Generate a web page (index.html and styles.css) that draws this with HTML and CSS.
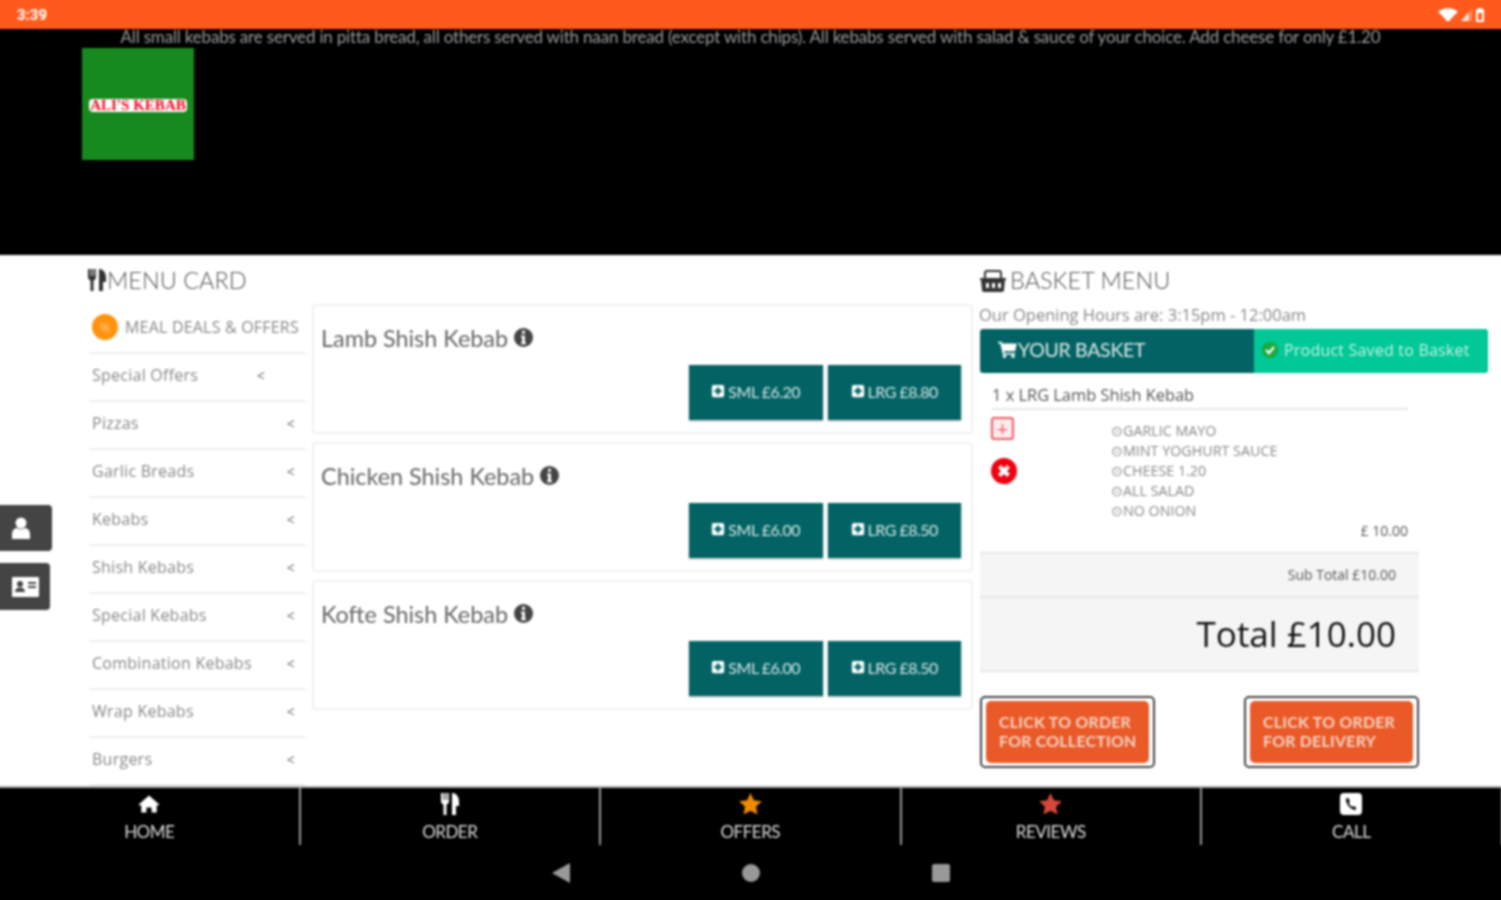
FILE: index.html
```html
<!DOCTYPE html>
<html lang="en">
<head>
    <meta charset="UTF-8">
    <meta name="viewport" content="width=device-width, initial-scale=1.0">
    <title>Ali's Kebab</title>
    <link rel="stylesheet" href="styles.css">
</head>
<body>
    <svg class="defs" width="0" height="0">
        <symbol id="cutlery" viewBox="0 0 20 24">
            <path d="M1 1v8c0 2 1 3 2.500 3.500V23h3V12.500C8 12 9 11 9 9V1H7.500v7h-1V1h-2v7h-1V1zM12 1c3 0 7 2 7 9v4h-3v9h-4z"/>
        </symbol>
        <symbol id="cart" viewBox="0 0 22 20">
            <path d="M0 1h4l1 2h17l-2 9H7l.4 2H20v2H5.500L2.500 3H0z"/><circle cx="7.500" cy="18" r="2"/><circle cx="17.500" cy="18" r="2"/>
        </symbol>
        <symbol id="plus-square" viewBox="0 0 16 16">
            <path fill-rule="evenodd" d="M3 1h10a2 2 0 0 1 2 2v10a2 2 0 0 1-2 2H3a2 2 0 0 1-2-2V3a2 2 0 0 1 2-2zM6.500 4v2.500H4v3h2.500V12h3V9.500H12v-3H9.500V4z"/>
        </symbol>
        <symbol id="info" viewBox="0 0 20 20">
            <path fill-rule="evenodd" d="M10 0a10 10 0 1 1 0 20 10 10 0 0 1 0-20zM8.500 3v3h3V3zM7.500 8v2h1v5h-1v2h5v-2h-1V8z"/>
        </symbol>
        <symbol id="star" viewBox="0 0 24 24">
            <path d="M12 1l3.400 7.300 7.900 1-5.800 5.400 1.500 7.900-7-3.900-7 3.900 1.500-7.900L.7 9.300l7.900-1z"/>
        </symbol>
    </svg>

    <div class="status-bar">
        <span class="clock">3:39</span>
        <div class="status-icons">
            <svg width="20" height="14" viewBox="0 0 20 14"><path d="M0 3.500C5.500-1 14.500-1 20 3.500L10 14z" fill="#fff"/></svg>
            <svg width="12" height="12" viewBox="0 0 12 12"><path d="M0 12L8 3v9z" fill="#fff" opacity=".85"/><path d="M9 2l2-2v12H9z" fill="#fff" opacity=".35"/></svg>
            <svg width="8" height="14" viewBox="0 0 8 14"><path fill-rule="evenodd" d="M2.500 0h3v1H8v13H0V1h2.500zM2 5v7h4V5z" fill="#fff"/></svg>
        </div>
    </div>

    <div class="banner">
        <p class="notice">All small kebabs are served in pitta bread, all others served with naan bread (except with chips). All kebabs served with salad &amp; sauce of your choice. Add cheese for only £1.20</p>
        <div class="logo"><span>ALI'S KEBAB</span></div>
    </div>

    <div class="main">
        <div class="side-tabs">
            <div class="side-tab">
                <svg width="18" height="22" viewBox="0 0 18 22"><circle cx="9" cy="6" r="5.500" fill="#fff"/><path d="M0 22v-5c0-4 3-6 5-6 2 1.500 6 1.500 8 0 2 0 5 2 5 6v5z" fill="#fff"/></svg>
            </div>
            <div class="side-tab">
                <svg width="27" height="20" viewBox="0 0 27 20"><path fill-rule="evenodd" d="M1 0h25a1 1 0 0 1 1 1v18a1 1 0 0 1-1 1H1a1 1 0 0 1-1-1V1a1 1 0 0 1 1-1zM8 4a3 3 0 1 0 0 6 3 3 0 0 0 0-6zM3 15h10c0-3-2-4.500-5-4.500S3 12 3 15zM16 5v2h8V5zm0 4v2h8V9z" fill="#fff"/></svg>
            </div>
        </div>

        <div class="menu-col">
            <h2 class="section-title">
                <svg class="title-icon" width="20" height="24"><use href="#cutlery"/></svg>MENU CARD
            </h2>
            <ul class="cat-list">
                <li class="cat cat-deals">
                    <span class="deal-badge">%</span>MEAL DEALS &amp; OFFERS
                </li>
                <li class="cat cat-short"><span>Special Offers</span><span class="chev">&lt;</span></li>
                <li class="cat"><span>Pizzas</span><span class="chev">&lt;</span></li>
                <li class="cat"><span>Garlic Breads</span><span class="chev">&lt;</span></li>
                <li class="cat"><span>Kebabs</span><span class="chev">&lt;</span></li>
                <li class="cat"><span>Shish Kebabs</span><span class="chev">&lt;</span></li>
                <li class="cat"><span>Special Kebabs</span><span class="chev">&lt;</span></li>
                <li class="cat"><span>Combination Kebabs</span><span class="chev">&lt;</span></li>
                <li class="cat"><span>Wrap Kebabs</span><span class="chev">&lt;</span></li>
                <li class="cat"><span>Burgers</span><span class="chev">&lt;</span></li>
            </ul>
        </div>

        <div class="products">
            <div class="product">
                <div class="product-name">Lamb Shish Kebab <svg class="info" width="19" height="19"><use href="#info"/></svg></div>
                <div class="price-row">
                    <button class="price-btn"><svg width="14" height="14"><use href="#plus-square"/></svg>SML £6.20</button>
                    <button class="price-btn"><svg width="14" height="14"><use href="#plus-square"/></svg>LRG £8.80</button>
                </div>
            </div>
            <div class="product">
                <div class="product-name">Chicken Shish Kebab <svg class="info" width="19" height="19"><use href="#info"/></svg></div>
                <div class="price-row">
                    <button class="price-btn"><svg width="14" height="14"><use href="#plus-square"/></svg>SML £6.00</button>
                    <button class="price-btn"><svg width="14" height="14"><use href="#plus-square"/></svg>LRG £8.50</button>
                </div>
            </div>
            <div class="product">
                <div class="product-name">Kofte Shish Kebab <svg class="info" width="19" height="19"><use href="#info"/></svg></div>
                <div class="price-row">
                    <button class="price-btn"><svg width="14" height="14"><use href="#plus-square"/></svg>SML £6.00</button>
                    <button class="price-btn"><svg width="14" height="14"><use href="#plus-square"/></svg>LRG £8.50</button>
                </div>
            </div>
        </div>

        <div class="basket-col">
            <h2 class="section-title">
                <svg class="title-icon basket-icon" width="26" height="24" viewBox="0 0 26 24"><path fill-rule="evenodd" d="M7 2h12a3 3 0 0 1 3 3v5h-2V5a1 1 0 0 0-1-1H7a1 1 0 0 0-1 1v5H4V5a3 3 0 0 1 3-3zM0 10h26v2h-1l-1 10a2 2 0 0 1-2 2H4a2 2 0 0 1-2-2L1 12H0zM6 15v5h3v-5zm6 0v5h3v-5zm6 0v5h3v-5z"/></svg>BASKET MENU
            </h2>
            <p class="hours">Our Opening Hours are: 3:15pm - 12:00am</p>
            <div class="basket-bar">
                <div class="basket-head">
                    <svg width="19" height="17"><use href="#cart"/></svg>YOUR BASKET
                </div>
                <div class="basket-saved">
                    <svg width="16" height="16" viewBox="0 0 16 16"><circle cx="8" cy="8" r="8" fill="#1fa83c"/><path d="M4 8l3 3 5-6" fill="none" stroke="#fff" stroke-width="2.200"/></svg>Product Saved to Basket
                </div>
            </div>
            <div class="basket-body">
                <div class="line-title">1 x LRG Lamb Shish Kebab</div>
                <div class="line-detail">
                    <div class="line-actions">
                        <span class="line-add">+</span>
                        <svg width="26" height="26" viewBox="0 0 26 26"><circle cx="13" cy="13" r="13" fill="#f0000f"/><path d="M8.500 8.500l9 9m0-9l-9 9" stroke="#fff" stroke-width="4"/></svg>
                    </div>
                    <ul class="options">
                        <li>⊙GARLIC MAYO</li>
                        <li>⊙MINT YOGHURT SAUCE</li>
                        <li>⊙CHEESE 1.20</li>
                        <li>⊙ALL SALAD</li>
                        <li>⊙NO ONION</li>
                    </ul>
                </div>
                <div class="line-price">£ 10.00</div>
                <div class="sub-total">Sub Total £10.00</div>
                <div class="grand-total">Total £10.00</div>
                <div class="order-row">
                    <div class="order-frame"><button class="order-btn">CLICK TO ORDER<br>FOR COLLECTION</button></div>
                    <div class="order-frame"><button class="order-btn">CLICK TO ORDER<br>FOR DELIVERY</button></div>
                </div>
            </div>
        </div>
    </div>

    <div class="bottom">
        <nav class="tabs">
            <div class="tab">
                <svg width="24" height="24" viewBox="0 -3 24 28"><path d="M12 1l12 10.500-1.500 1.500L21 11.800V21h-6v-6H9v6H3v-9.200L1.500 13 0 11.500z" fill="#fff"/></svg>
                <span>HOME</span>
            </div>
            <div class="tab">
                <svg width="22" height="24" fill="#fff"><use href="#cutlery"/></svg>
                <span>ORDER</span>
            </div>
            <div class="tab">
                <svg width="25" height="24" fill="#f08a00"><use href="#star"/></svg>
                <span>OFFERS</span>
            </div>
            <div class="tab">
                <svg width="25" height="24" fill="#d8473c"><use href="#star"/></svg>
                <span>REVIEWS</span>
            </div>
            <div class="tab">
                <svg width="22" height="24" viewBox="0 0 22 24"><path fill-rule="evenodd" d="M4 1h14a4 4 0 0 1 4 4v14a4 4 0 0 1-4 4H4a4 4 0 0 1-4-4V5a4 4 0 0 1 4-4zM7 6l-1 1c0 5 4 10 9 11l1.500-2-3-2-1.200 1C10 14 9 12 9 10l1-1-2-3z" fill="#fff"/></svg>
                <span>CALL</span>
            </div>
        </nav>
        <div class="soft-keys">
            <span class="key-back"></span>
            <span class="key-home"></span>
            <span class="key-recent"></span>
        </div>
    </div>
</body>
</html>
```

FILE: styles.css
```css
* {
    margin: 0;
    padding: 0;
    box-sizing: border-box;
}

html {
    background: #000;
    overflow: hidden;
}

/* the blur needs 5px of spare page on each side or the edges go dark */
body {
    width: 1511px;
    height: 910px;
    margin: -5px 0 0 -5px;
    display: flex;
    flex-direction: column;
    font-family: 'Open Sans', sans-serif;
    filter: blur(0.8px);
}

.defs {
    position: absolute;
}

ul {
    list-style: none;
}

.status-bar {
    height: 34px;
    flex: none;
    display: flex;
    align-items: center;
    justify-content: space-between;
    padding: 5px 21px 0 22px;
    background: #ff5a1c;
    color: white;
}

.clock {
    font-family: Roboto, sans-serif;
    font-size: 15px;
    font-weight: 700;
}

.status-icons {
    display: flex;
    align-items: center;
    gap: 3px;
    padding-right: 1px;
}

.banner {
    height: 226px;
    flex: none;
    background: #000;
    padding-left: 87px;
}

.notice {
    margin-left: -87px;
    height: 19px;
    line-height: 16px;
    text-align: center;
    font-family: Lato, sans-serif;
    font-size: 17px;
    letter-spacing: -0.18px;
    color: #9a9a9a;
}

.logo {
    width: 112px;
    height: 112px;
    display: flex;
    align-items: center;
    justify-content: center;
    padding-top: 3px;
    background: #168a1e;
}

.logo span {
    font-family: 'Liberation Serif', serif;
    font-size: 15px;
    font-weight: bold;
    white-space: nowrap;
    color: #f00a1e;
    background: white;
    border-radius: 4px;
    padding: 0 1px;
    line-height: 13px;
}

.main {
    position: relative;
    height: 531px;
    flex: none;
    display: flex;
    background: white;
    padding-left: 95px;
    overflow: hidden;
}

.side-tabs {
    position: absolute;
    left: 0;
    top: 250px;
    display: flex;
    flex-direction: column;
    gap: 12px;
}

.side-tab {
    width: 57px;
    height: 46px;
    display: flex;
    align-items: center;
    justify-content: center;
    padding: 0 10px 0 5px;
    background: #444;
    border-radius: 0 4px 4px 0;
}

.side-tab + .side-tab {
    width: 55px;
    height: 47px;
    padding-right: 0;
}

.section-title {
    height: 49px;
    display: flex;
    align-items: center;
    font-family: Lato, sans-serif;
    font-size: 23.500px;
    font-weight: 300;
    color: #555;
}

.title-icon {
    margin-left: -3px;
    fill: #333;
}

.basket-icon {
    margin: 0 4px 0 0;
}

.menu-col {
    width: 215px;
    flex: none;
}

.cat {
    height: 48px;
    display: flex;
    align-items: center;
    justify-content: space-between;
    padding: 0 10px 5px 2px;
    font-size: 16px;
    letter-spacing: 0.25px;
    color: #888;
    border-bottom: 2px solid #eee;
}

.cat-deals {
    justify-content: flex-start;
    gap: 7px;
    height: 50px;
    padding: 0 0 2px 2px;
    font-size: 16px;
    letter-spacing: 0.2px;
    white-space: nowrap;
}

.cat-short {
    padding-right: 40px;
}

.deal-badge {
    width: 26px;
    height: 26px;
    flex: none;
    display: flex;
    align-items: center;
    justify-content: center;
    border-radius: 50%;
    font-size: 12px;
    color: #ffc98a;
    background: #ff930f;
}

.chev {
    padding-top: 2px;
    font-size: 14px;
    color: #666;
}

.products {
    width: 661px;
    flex: none;
    margin: 49px 7px 0;
    display: flex;
    flex-direction: column;
    gap: 8px;
}

.product {
    height: 130px;
    padding: 9px 10px 0 7px;
    background: white;
    border: 2px solid #f1f1f1;
    border-radius: 4px;
}

.product-name {
    height: 45px;
    display: flex;
    align-items: center;
    font-family: Lato, sans-serif;
    font-size: 23.400px;
    color: #666;
    white-space: pre;
}

.info {
    fill: #444;
}

.price-row {
    display: flex;
    justify-content: flex-end;
    gap: 5px;
    margin-top: 5px;
}

.price-btn {
    width: 133.500px;
    height: 55px;
    display: flex;
    align-items: center;
    justify-content: center;
    gap: 3px;
    padding-bottom: 3px;
    background: #036364;
    border: none;
    fill: white;
    color: #d5e5e5;
    font-family: Lato, sans-serif;
    font-size: 16px;
    letter-spacing: -0.5px;
    box-shadow: 0 1px 2px rgba(0, 0, 0, 0.3);
}

.basket-col {
    width: 508px;
    flex: none;
}

.hours {
    height: 25px;
    margin-left: -1px;
    line-height: 22px;
    font-size: 16.500px;
    color: #888;
}

.basket-bar {
    height: 44px;
    display: flex;
}

.basket-head {
    width: 274px;
    display: flex;
    align-items: center;
    gap: 1px;
    padding: 0 0 3px 18px;
    background: #036364;
    border-radius: 3px 0 0 3px;
    fill: white;
    color: #dfeaea;
    font-family: Lato, sans-serif;
    font-size: 19.500px;
    letter-spacing: -0.3px;
}

.basket-saved {
    flex: 1;
    display: flex;
    align-items: center;
    gap: 6px;
    padding: 0 0 3px 8px;
    background: #00c896;
    border-radius: 0 3px 3px 0;
    color: #c6f2e5;
    font-size: 16px;
    letter-spacing: 0.2px;
}

.basket-body {
    width: 439px;
}

.line-title {
    margin: 10px 11px 0 12px;
    height: 27px;
    line-height: 24px;
    font-size: 16.400px;
    color: #555;
    border-bottom: 2px solid #e8e8e8;
}

.line-detail {
    display: flex;
    padding: 7px 0 0 11px;
}

.line-actions {
    width: 120px;
    flex: none;
    display: flex;
    flex-direction: column;
    gap: 18px;
}

.line-add {
    width: 23px;
    height: 23px;
    display: flex;
    align-items: center;
    justify-content: center;
    color: #f25a66;
    font-size: 20px;
    line-height: 1;
    background: #fdeaec;
    border: 2px solid #f25a66;
    border-radius: 3px;
}

.options {
    padding-top: 4px;
    font-size: 14.300px;
    line-height: 20px;
    color: #888;
}

.line-price {
    margin: 0 11px 0 0;
    height: 31px;
    line-height: 20px;
    text-align: right;
    font-size: 14px;
    color: #555;
}

.sub-total {
    height: 46px;
    line-height: 42px;
    padding-right: 23px;
    text-align: right;
    font-size: 14px;
    color: #555;
    background: #f5f5f5;
    border-top: 2px solid #e8e8e8;
    border-bottom: 2px solid #e8e8e8;
}

.grand-total {
    height: 74px;
    line-height: 72px;
    padding-right: 23px;
    text-align: right;
    font-size: 35px;
    color: #111;
    background: #f5f5f5;
    border-bottom: 2px solid #e8e8e8;
}

.order-row {
    display: flex;
    justify-content: space-between;
    margin-top: 24px;
}

.order-frame {
    width: 175px;
    height: 72px;
    padding: 3px 4px;
    background: white;
    border: 2px solid #444;
    border-radius: 5px;
}

.order-btn {
    width: 100%;
    height: 100%;
    padding: 0 0 2px 13px;
    text-align: left;
    background: #ea5a28;
    border: none;
    border-radius: 5px;
    color: #f4d4c4;
    font-family: Lato, sans-serif;
    font-size: 15.800px;
    font-weight: 700;
    line-height: 19px;
    letter-spacing: 0.3px;
    white-space: nowrap;
}

.bottom {
    flex: 1;
    background: #000;
    border-top: 2px solid #aaa;
}

.tabs {
    height: 57px;
    display: flex;
    margin-left: 5px;
}

.tab {
    width: 300.500px;
    display: flex;
    flex-direction: column;
    align-items: center;
    gap: 5px;
    padding-top: 4px;
    border-right: 2px solid #999;
    font-family: Lato, sans-serif;
    font-size: 17px;
    letter-spacing: -0.5px;
    color: #ddd;
}

.soft-keys {
    display: flex;
    align-items: center;
    justify-content: center;
    gap: 172px;
    height: 55px;
}

.key-back {
    width: 0;
    height: 0;
    border-top: 10px solid transparent;
    border-bottom: 10px solid transparent;
    border-right: 18px solid #999;
}

.key-home {
    width: 18px;
    height: 18px;
    border-radius: 50%;
    background: #999;
}

.key-recent {
    width: 18px;
    height: 18px;
    border-radius: 2px;
    background: #999;
}
```
